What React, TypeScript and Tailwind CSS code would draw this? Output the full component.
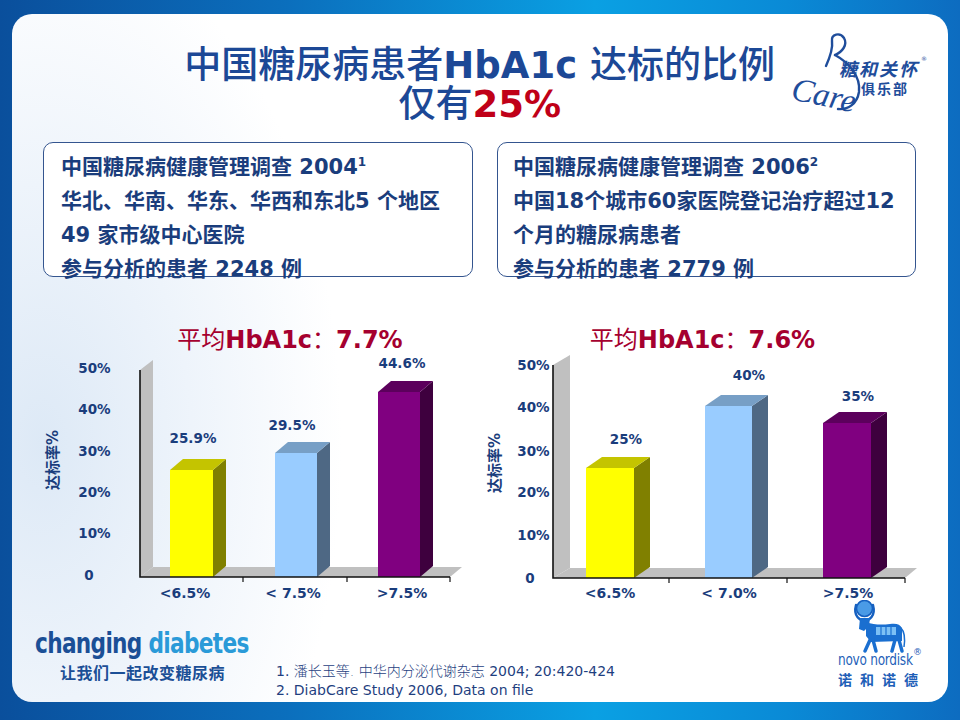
import React from "react";

const NAVY = "#1a3d7c";
const SANS = "'DejaVu Sans','Noto Sans CJK SC',sans-serif";

type BarProps = {
  x: number;
  w: number;
  top: number;
  base: number;
  dx: number;
  dy: number;
  front: string;
  side: string;
  topc: string;
};

function Bar({ x, w, top, base, dx, dy, front, side, topc }: BarProps) {
  return (
    <g>
      <polygon
        points={`${x + w},${top} ${x + w + dx},${top + dy} ${x + w + dx},${base + dy} ${x + w},${base}`}
        fill={side}
      />
      <polygon
        points={`${x},${top} ${x + dx},${top + dy} ${x + w + dx},${top + dy} ${x + w},${top}`}
        fill={topc}
      />
      <rect x={x} y={top} width={w} height={base - top} fill={front} />
    </g>
  );
}

const COLORS = [
  { front: "#ffff00", side: "#808000", topc: "#c4c400" },
  { front: "#99ccff", side: "#4e6884", topc: "#779fc6" },
  { front: "#800080", side: "#3e003e", topc: "#5c005c" },
];

type ChartCfg = {
  vb: string;
  w: number;
  wall: string;
  floor: string;
  axisX: number;
  axisTop: number;
  base: number;
  axisRight: number;
  ticks: number[];
  dx: number;
  dy: number;
  bars: { x: number; w: number; top: number }[];
  values: { x: number; y: number; t: string }[];
  cats: { x: number; t: string }[];
  yl: { x: number; y: number; t: string }[];
  yTitle: { x: number; y: number };
};

function Chart({ c }: { c: ChartCfg }) {
  return (
    <svg width={c.w} height={245} viewBox={c.vb} className="block">
      <polygon points={c.wall} fill="#c0c0c0" />
      <polygon points={c.floor} fill="#c0c0c0" />
      {c.bars.map((b, i) => (
        <Bar key={i} x={b.x} w={b.w} top={b.top} base={c.base} dx={c.dx} dy={c.dy} {...COLORS[i]} />
      ))}
      <path
        d={`M${c.axisX} ${c.axisTop} V${c.base} H${c.axisRight}`}
        fill="none"
        stroke="#111"
        strokeWidth="1.6"
      />
      {c.ticks.map((t) => (
        <line key={t} x1={t} y1={c.base} x2={t} y2={c.base + 5} stroke="#111" strokeWidth="1.2" />
      ))}
      {c.values.map((v) => (
        <text
          key={v.t}
          x={v.x}
          y={v.y}
          textAnchor="middle"
          dominantBaseline="central"
          fontFamily={SANS}
          fontWeight="700"
          fontSize="13.5"
          fill={NAVY}
        >
          {v.t}
        </text>
      ))}
      {c.cats.map((v) => (
        <text
          key={v.t}
          x={v.x}
          y={593}
          textAnchor="middle"
          dominantBaseline="central"
          fontFamily={SANS}
          fontWeight="700"
          fontSize="14"
          fill={NAVY}
        >
          {v.t}
        </text>
      ))}
      {c.yl.map((v) => (
        <text
          key={v.t}
          x={v.x}
          y={v.y}
          textAnchor="middle"
          dominantBaseline="central"
          fontFamily={SANS}
          fontWeight="700"
          fontSize="13.5"
          fill={NAVY}
        >
          {v.t}
        </text>
      ))}
      <text
        x={c.yTitle.x}
        y={c.yTitle.y}
        textAnchor="middle"
        dominantBaseline="central"
        transform={`rotate(-90 ${c.yTitle.x} ${c.yTitle.y})`}
        fontFamily={SANS}
        fontWeight="700"
        fontSize="15"
        fill={NAVY}
      >
        达标率%
      </text>
    </svg>
  );
}

const LEFT: ChartCfg = {
  vb: "40 355 430 245",
  w: 430,
  wall: "140,370 153,360 153,567 140,577",
  floor: "140,577 153,567 462,567 450,577",
  axisX: 140,
  axisTop: 370,
  base: 577,
  axisRight: 450,
  ticks: [243, 347, 450],
  dx: 13,
  dy: -11,
  bars: [
    { x: 170, w: 43, top: 470 },
    { x: 275, w: 42, top: 453 },
    { x: 378, w: 42, top: 392 },
  ],
  values: [
    { x: 193, y: 438, t: "25.9%" },
    { x: 292, y: 425, t: "29.5%" },
    { x: 402, y: 363, t: "44.6%" },
  ],
  cats: [
    { x: 185, t: "<6.5%" },
    { x: 293, t: "< 7.5%" },
    { x: 402, t: ">7.5%" },
  ],
  yl: [
    { x: 94.5, y: 368, t: "50%" },
    { x: 94.5, y: 409, t: "40%" },
    { x: 94.5, y: 451, t: "30%" },
    { x: 94.5, y: 492, t: "20%" },
    { x: 94.5, y: 533, t: "10%" },
    { x: 89, y: 575, t: "0" },
  ],
  yTitle: { x: 53, y: 460 },
};

const RIGHT: ChartCfg = {
  vb: "480 355 445 245",
  w: 445,
  wall: "553,365 570,355 570,568 553,578",
  floor: "553,578 570,568 917,568 905,578",
  axisX: 553,
  axisTop: 365,
  base: 578,
  axisRight: 905,
  ticks: [669, 787, 905],
  dx: 16,
  dy: -11,
  bars: [
    { x: 586, w: 48, top: 468 },
    { x: 705, w: 47, top: 406 },
    { x: 823, w: 48, top: 423 },
  ],
  values: [
    { x: 626, y: 439, t: "25%" },
    { x: 749, y: 375, t: "40%" },
    { x: 858, y: 396, t: "35%" },
  ],
  cats: [
    { x: 610, t: "<6.5%" },
    { x: 729, t: "< 7.0%" },
    { x: 848, t: ">7.5%" },
  ],
  yl: [
    { x: 533.5, y: 365, t: "50%" },
    { x: 533.5, y: 407, t: "40%" },
    { x: 533.5, y: 451, t: "30%" },
    { x: 533.5, y: 492, t: "20%" },
    { x: 533.5, y: 535, t: "10%" },
    { x: 530, y: 578, t: "0" },
  ],
  yTitle: { x: 495, y: 463 },
};

function CareLogo() {
  return (
    <svg width="155" height="90" viewBox="775 28 155 90" className="block">
      <g fill="none" stroke="#1f4d9b" strokeWidth="2.4" strokeLinecap="round">
        <path d="M826 66 C830 57 833 48 832 41 C831 34 840 32 844 38 C848 45 842 52 835 55" />
        <path d="M835 55 C848 62 861 76 859 92 C857 104 848 110 838 109" />
      </g>
      <text
        x="790"
        y="99"
        transform="rotate(12 790 99)"
        fontFamily="'Liberation Serif', serif"
        fontStyle="italic"
        fontSize="33"
        fill="#1f4d9b"
      >
        Care
      </text>
      <text
        transform="translate(839 76) skewX(-14)"
        x="0"
        y="0"
        fontFamily="'Noto Sans CJK SC', sans-serif"
        fontWeight="700"
        fontSize="18"
        letterSpacing="2"
        fill="#1f4d9b"
      >
        糖和关怀
      </text>
      <text x="921" y="61" fontFamily="'DejaVu Sans', sans-serif" fontSize="6" fill="#1f4d9b">
        ®
      </text>
      <text
        x="861"
        y="94"
        fontFamily="'Noto Sans CJK SC', sans-serif"
        fontWeight="700"
        fontSize="14"
        letterSpacing="2"
        fill="#1f4d9b"
      >
        俱乐部
      </text>
    </svg>
  );
}

function Bull() {
  return (
    <svg width="72" height="53" viewBox="0 0 72 53" className="block">
      <path
        d="M18 5 C15 16 22 21 26.5 20 C31 21 38 16 35 5"
        fill="none"
        stroke="#1560c0"
        strokeWidth="2.4"
        strokeLinecap="round"
      />
      <circle cx="26.5" cy="8.5" r="8" fill="#4a9be6" stroke="#1560c0" strokeWidth="1.6" />
      <path d="M22 18 L32 18 L31 26 L26 31 L21 29 Z" fill="#1a6fd0" />
      <path
        d="M28 22 C36 25 44 25 52 24 C58 23 62 24 64 28 L64 41 L33 42 L28 36 Z"
        fill="#1a6fd0"
      />
      <path d="M38 27 L58 27 L58 35 L38 35 Z" fill="#7cc0f5" />
      <g stroke="#1a6fd0" strokeWidth="1.2">
        <line x1="43" y1="27" x2="43" y2="35" />
        <line x1="48" y1="27" x2="48" y2="35" />
        <line x1="53" y1="27" x2="53" y2="35" />
      </g>
      <g stroke="#1a6fd0" strokeWidth="3.4" strokeLinecap="round">
        <path d="M32 40 L27 51" />
        <path d="M35 40 L38 51" />
        <path d="M57 40 L54 51" />
        <path d="M61 40 L64 51" />
      </g>
      <path d="M63 28 C67 32 67 40 66 47" fill="none" stroke="#1a6fd0" strokeWidth="1.5" />
    </svg>
  );
}

export default function App() {
  return (
    <div className="w-[960px] h-[720px] overflow-hidden bg-[linear-gradient(90deg,#0a4f9c_0%,#0b6fbd_30%,#0aa0e3_62%,#0a8ad6_82%,#0d6cc0_100%)] pt-[14px] pl-[12px] pr-[12px] pb-[18px]">
      <div className="flex h-full flex-col rounded-[20px] bg-white bg-[radial-gradient(ellipse_300px_520px_at_30px_430px,#dde9f6_0%,#eef4fb_50%,#ffffff_100%)]">
        {/* Title row */}
        <div className="grid grid-cols-[1fr_auto_1fr] pt-[14px]">
          <div />
          <div className="pt-[18px] text-center text-[37px] leading-[39px] text-[#1c4896] font-['DejaVu_Sans','Noto_Sans_CJK_SC',sans-serif]">
            <div className="whitespace-nowrap">
              <span className="font-medium">中国糖尿病患者</span>
              <span className="font-bold">HbA1c </span>
              <span className="font-medium">达标的比例</span>
            </div>
            <div className="whitespace-nowrap">
              <span className="font-medium">仅有</span>
              <span className="font-bold text-[#c00018]">25%</span>
            </div>
          </div>
          <div className="flex justify-end pr-[18px]">
            <CareLogo />
          </div>
        </div>

        {/* Info boxes */}
        <div className="mt-[18px] flex gap-[24px] pl-[31px] text-[21px] font-bold leading-[34px] text-[#1a3d7c] font-['DejaVu_Sans','Noto_Sans_CJK_SC',sans-serif]">
          <div className="h-[135px] w-[430px] whitespace-nowrap rounded-[10px] border border-[#34558f] bg-white pl-[17px] pt-[7px]">
            <div className="h-[34px]">
              中国糖尿病健康管理调查 2004
              <span className="relative -top-[8px] text-[12px] leading-none">1</span>
            </div>
            <div className="h-[34px]">华北、华南、华东、华西和东北5 个地区</div>
            <div className="h-[34px]">49 家市级中心医院</div>
            <div className="h-[33px]">参与分析的患者 2248 例</div>
          </div>
          <div className="h-[135px] w-[419px] whitespace-nowrap rounded-[10px] border border-[#34558f] bg-white pl-[15px] pt-[7px]">
            <div className="h-[34px]">
              中国糖尿病健康管理调查 2006
              <span className="relative -top-[8px] text-[12px] leading-none">2</span>
            </div>
            <div className="h-[34px]">中国18个城市60家医院登记治疗超过12</div>
            <div className="h-[34px]">个月的糖尿病患者</div>
            <div className="h-[33px]">参与分析的患者 2779 例</div>
          </div>
        </div>

        {/* Charts */}
        <div className="mt-[48px] flex gap-[10px] pl-[28px]">
          <div className="w-[430px]">
            <div className="whitespace-nowrap pl-[70px] text-center text-[24px] leading-[30px] text-[#a5002f] font-['DejaVu_Sans','Noto_Sans_CJK_SC',sans-serif]">
              <span>平均</span>
              <span className="font-bold">HbA1c</span>
              <span>：</span>
              <span className="font-bold">7.7%</span>
            </div>
            <Chart c={LEFT} />
          </div>
          <div className="w-[445px]">
            <div className="whitespace-nowrap text-center text-[24px] leading-[30px] text-[#a5002f] font-['DejaVu_Sans','Noto_Sans_CJK_SC',sans-serif]">
              <span>平均</span>
              <span className="font-bold">HbA1c</span>
              <span>：</span>
              <span className="font-bold">7.6%</span>
            </div>
            <Chart c={RIGHT} />
          </div>
        </div>

        {/* Bottom row */}
        <div className="flex flex-1 pl-[23px] pr-[18px]">
          <div className="w-[241px] pt-[28px]">
            <div className="origin-left scale-x-[0.86] whitespace-nowrap text-[28px] font-bold leading-[32px] tracking-[-0.8px] font-['DejaVu_Sans_Condensed','DejaVu_Sans',sans-serif]">
              <span className="text-[#1b4f96]">changing </span>
              <span className="text-[#2a9ad8]">diabetes</span>
            </div>
            <div className="mt-[2px] whitespace-nowrap pl-[25px] text-[16px] font-bold leading-[20px] tracking-[0.5px] text-[#1b4f96] font-['Noto_Sans_CJK_SC',sans-serif]">
              让我们一起改变糖尿病
            </div>
          </div>
          <div className="flex-1 whitespace-nowrap pt-[62px] text-[14px] leading-[19px] text-[#1f3f7f] font-['DejaVu_Sans','Noto_Sans_CJK_SC',sans-serif]">
            <div>
              1. <span className="font-light">潘长玉等. 中华内分泌代谢杂志</span> 2004; 20:420-424
            </div>
            <div>2. DiabCare Study 2006, Data on file</div>
          </div>
          <div className="flex w-[92px] flex-col items-start">
            <Bull />
            <div className="flex h-[15px] items-start whitespace-nowrap text-[15px] leading-[15px] text-[#1f5fb8]">
              <span className="inline-block origin-left scale-x-[0.9] tracking-[-0.3px] font-['DejaVu_Sans_Condensed','DejaVu_Sans',sans-serif]">
                novo nordisk
              </span>
              <span className="-ml-[8px] -mt-[6px] text-[9px] leading-[10px] font-['DejaVu_Sans',sans-serif]">®</span>
            </div>
            <div className="mt-[4px] whitespace-nowrap text-[14px] font-bold leading-[15px] tracking-[8px] text-[#1f5fb8] font-['Noto_Sans_CJK_SC',sans-serif]">
              诺和诺德
            </div>
          </div>
        </div>
      </div>
    </div>
  );
}
